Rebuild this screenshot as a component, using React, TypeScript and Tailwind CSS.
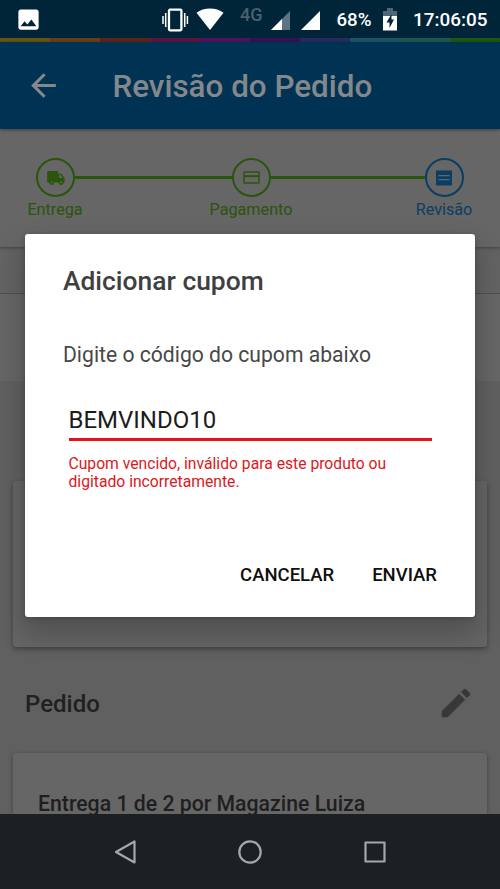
import * as React from 'react';
import { MdArrowBack, MdEdit, MdImage } from 'react-icons/md';

const stripes = [
  'bg-[#68530f]',
  'bg-[#683e14]',
  'bg-[#5e2418]',
  'bg-[#5e163f]',
  'bg-[#4c145a]',
  'bg-[#361258]',
  'bg-[#252c60]',
  'bg-[#1a5564]',
  'bg-[#1a5850]',
  'bg-[#1c580f]',
];

const StatusBar: React.FC = () => (
  <div className="flex h-[38px] items-center bg-[#002438] text-white">
    <MdImage className="ml-[14.5px] size-[27px]" />
    <svg className="ml-[118px] mt-px h-[24px] w-[30px]" viewBox="0 0 30 24" fill="none" stroke="currentColor">
      <rect x="9" y="1.7" width="12.4" height="20.6" rx="1" strokeWidth="2.3" />
      <path d="M5.700 5v14M3 8v8M24.700 5v14M27.400 8v8" strokeWidth="1.5" />
    </svg>
    <svg className="ml-[6px] mt-[-1px] h-[22px] w-[28px]" viewBox="0 0 28 22" fill="currentColor">
      <path d="M14 22 .5 4.800C4 2 9 .5 14 .5S24 2 27.500 4.800Z" />
    </svg>
    <span className="ml-[16.5px] mt-[-9px] w-[24px] text-[18px] leading-5 font-medium text-[#48606f]">4G</span>
    <svg className="ml-[7px] mt-[2px] h-[19px] w-[19px]" viewBox="0 0 19 19" fill="currentColor">
      <path d="M19 0v19H0Z" className="fill-[#5d7483]" />
      <path d="M11 8v11H0Z" />
    </svg>
    <svg className="ml-[10.5px] mt-[2px] h-[19px] w-[19px]" viewBox="0 0 19 19" fill="currentColor">
      <path d="M19 0v19H0Z" />
    </svg>
    <span className="ml-[17px] mt-[2px] w-[35px] text-[18.700px] font-medium whitespace-nowrap">68%</span>
    <svg className="ml-[11px] h-[23px] w-[14px]" viewBox="0 0 14 23">
      <path d="M4 0h6v3h4v5H0V3h4Z" className="fill-[#4d6677]" />
      <path d="M0 8h14v14.500H0Z" className="fill-white" />
      <path d="M8.500 6 3.500 14.500h3v5.500L11 11.500H8.500Z" className="fill-[#002438]" />
    </svg>
    <span className="ml-[16.5px] mt-[2px] text-[18.900px] font-medium whitespace-nowrap">17:06:05</span>
  </div>
);

const TruckIcon = () => (
  <svg className="ml-[2px] h-[14px] w-[18px]" viewBox="0 0 18 14">
    <path
      d="M1.500 0H11v2.600h3L17.600 6.800V11.500H.2V1.300Q.2 0 1.500 0Z"
      fill="currentColor"
    />
    <path d="M12.200 4h1.400l2 2.700h-3.400Z" className="fill-[#666666]" />
    <circle cx="4.700" cy="11.400" r="2.500" fill="currentColor" />
    <circle cx="14" cy="11.400" r="2.500" fill="currentColor" />
    <circle cx="4.700" cy="11.400" r=".9" className="fill-[#666666]" />
    <circle cx="14" cy="11.400" r=".9" className="fill-[#666666]" />
  </svg>
);

const CardIcon = () => (
  <svg className="h-[13px] w-[17px]" viewBox="0 0 17 13" fill="none" stroke="currentColor">
    <rect x="1" y="1" width="15" height="11" rx=".6" strokeWidth="1.500" />
    <path d="M1 5.200h15" strokeWidth="2" />
  </svg>
);

const ReceiptIcon = () => (
  <svg className="h-[16px] w-[16px]" viewBox="0 0 16 16">
    <path
      d="M0 0 1.330 1 2.670 0 4 1 5.330 0 6.670 1 8 0 9.330 1 10.670 0 12 1 13.330 0 14.670 1 16 0V16L14.670 15 13.330 16 12 15 10.670 16 9.330 15 8 16 6.670 15 5.330 16 4 15 2.670 16 1.330 15 0 16Z"
      fill="currentColor"
    />
    <path d="M2.500 5.600h11M2.500 9.600h11" className="stroke-[#666666]" strokeWidth="1.200" />
  </svg>
);

interface StepProps {
  icon: React.ReactNode;
  label: string;
  className: string;
}

const Step: React.FC<StepProps> = ({ icon, label, className }) => (
  <div className={`flex w-[90px] flex-col items-center ${className}`}>
    <div className="flex size-[39px] items-center justify-center rounded-full border-2 border-current">{icon}</div>
    <span className="mt-[3px] text-[16.200px] leading-[20px]">{label}</span>
  </div>
);

const Dialog: React.FC = () => (
  <div
    role="dialog"
    className="absolute top-[234px] left-[25px] flex h-[383px] w-[450px] flex-col rounded-[3px] bg-white px-[38px] shadow-[0_14px_26px_4px_rgba(0,0,0,0.2),0_1px_5px_rgba(0,0,0,0.2)]"
  >
    <h2 className="mt-[31px] text-[26.400px] leading-[32px] font-medium text-[#404040]">Adicionar cupom</h2>
    <p className="mt-[44px] text-[21.150px] leading-[28px] text-[#484848]">Digite o código do cupom abaixo</p>
    <div className="mx-[5.5px] mt-[35px] flex h-[37px] items-start border-b-[3px] border-[#e3121b] text-[24px] leading-[32px] text-[#1c1c1c]">
      BEMVINDO10
    </div>
    <p className="mx-[5.5px] mt-[14px] text-[15.700px] leading-[18px] whitespace-nowrap text-[#dc1822]">
      Cupom vencido, inválido para este produto ou
      <br />
      digitado incorretamente.
    </p>
    <div className="mt-[71px] flex justify-end gap-[38px] text-[18.500px] leading-[26px] font-medium text-[#101010]">
      <button>CANCELAR</button>
      <button>ENVIAR</button>
    </div>
  </div>
);

const App: React.FC = () => {
  return (
    <div className="relative flex h-[889px] w-[500px] flex-col overflow-hidden bg-[#606060] font-[Roboto,sans-serif]">
      <StatusBar />
      <div className="flex h-[4px]">
        {stripes.map((stripe) => (
          <div key={stripe} className={`flex-1 ${stripe}`} />
        ))}
      </div>

      {/* App bar */}
      <header className="z-10 flex h-[87px] items-center bg-[#003353] text-[#84888b] shadow-[0_1px_3px_rgba(0,0,0,0.4)]">
        <MdArrowBack className="ml-[25px] size-[37px]" />
        <h1 className="ml-[50.5px] mt-[3px] text-[31.400px] leading-10 font-medium">Revisão do Pedido</h1>
      </header>

      {/* Checkout steps */}
      <div className="relative flex h-[118px] justify-between bg-[#666666] pt-[29px] pr-[11px] pl-[10px] shadow-[0_1px_3px_rgba(0,0,0,0.35)]">
        <Step icon={<TruckIcon />} label="Entrega" className="text-[#2b540c]" />
        <div className="mx-[-26px] mt-[18px] h-[3px] w-[158px] bg-[#2b540c]" />
        <Step icon={<CardIcon />} label="Pagamento" className="text-[#2b540c]" />
        <div className="mx-[-26px] mt-[18px] h-[3px] w-[155px] bg-[#2b540c]" />
        <Step icon={<ReceiptIcon />} label="Revisão" className="text-[#0a3e64]" />
      </div>

      <div className="h-[47px] shrink-0 border-b border-[#505050] bg-[#636363]" />
      <div className="h-[87px] shrink-0 bg-[#666666]" />
      <div className="mx-[13px] mt-[100px] h-[166px] shrink-0 rounded-[3px] bg-[#656565] shadow-[0_2px_5px_rgba(0,0,0,0.35)]" />

      {/* Order */}
      <div className="flex h-[106px] shrink-0 items-center justify-between pt-[8px] pr-[25px] pl-[25px]">
        <h2 className="text-[24px] font-medium text-[#202020]">Pedido</h2>
        <MdEdit className="mt-[-2px] size-[38px] text-[#383838]" />
      </div>
      <div className="mx-[13px] flex h-[61px] shrink-0 items-end rounded-t-[3px] bg-[#666666] pl-[25px] shadow-[0_1px_4px_rgba(0,0,0,0.35)]">
        <span className="mb-[-3px] text-[21.250px] leading-[26px] font-medium text-[#201e20]">Entrega 1 de 2 por Magazine Luiza</span>
      </div>

      {/* System navigation */}
      <nav className="z-10 flex h-[75px] shrink-0 items-center justify-center gap-[99px] bg-[#1c2022] text-[#a4a8aa]">
        <svg className="size-[26px]" viewBox="0 0 26 26" fill="none" stroke="currentColor" strokeWidth="2.200" strokeLinejoin="round">
          <path d="M22.500 2.500v21L4 13Z" />
        </svg>
        <svg className="size-[26px]" viewBox="0 0 26 26" fill="none" stroke="currentColor" strokeWidth="2.200">
          <circle cx="13" cy="13" r="10.700" />
        </svg>
        <svg className="size-[26px]" viewBox="0 0 26 26" fill="none" stroke="currentColor" strokeWidth="2.200" strokeLinejoin="round">
          <path d="M3.500 3.500h19v19h-19Z" />
        </svg>
      </nav>

      <Dialog />
    </div>
  );
};

export default App;
